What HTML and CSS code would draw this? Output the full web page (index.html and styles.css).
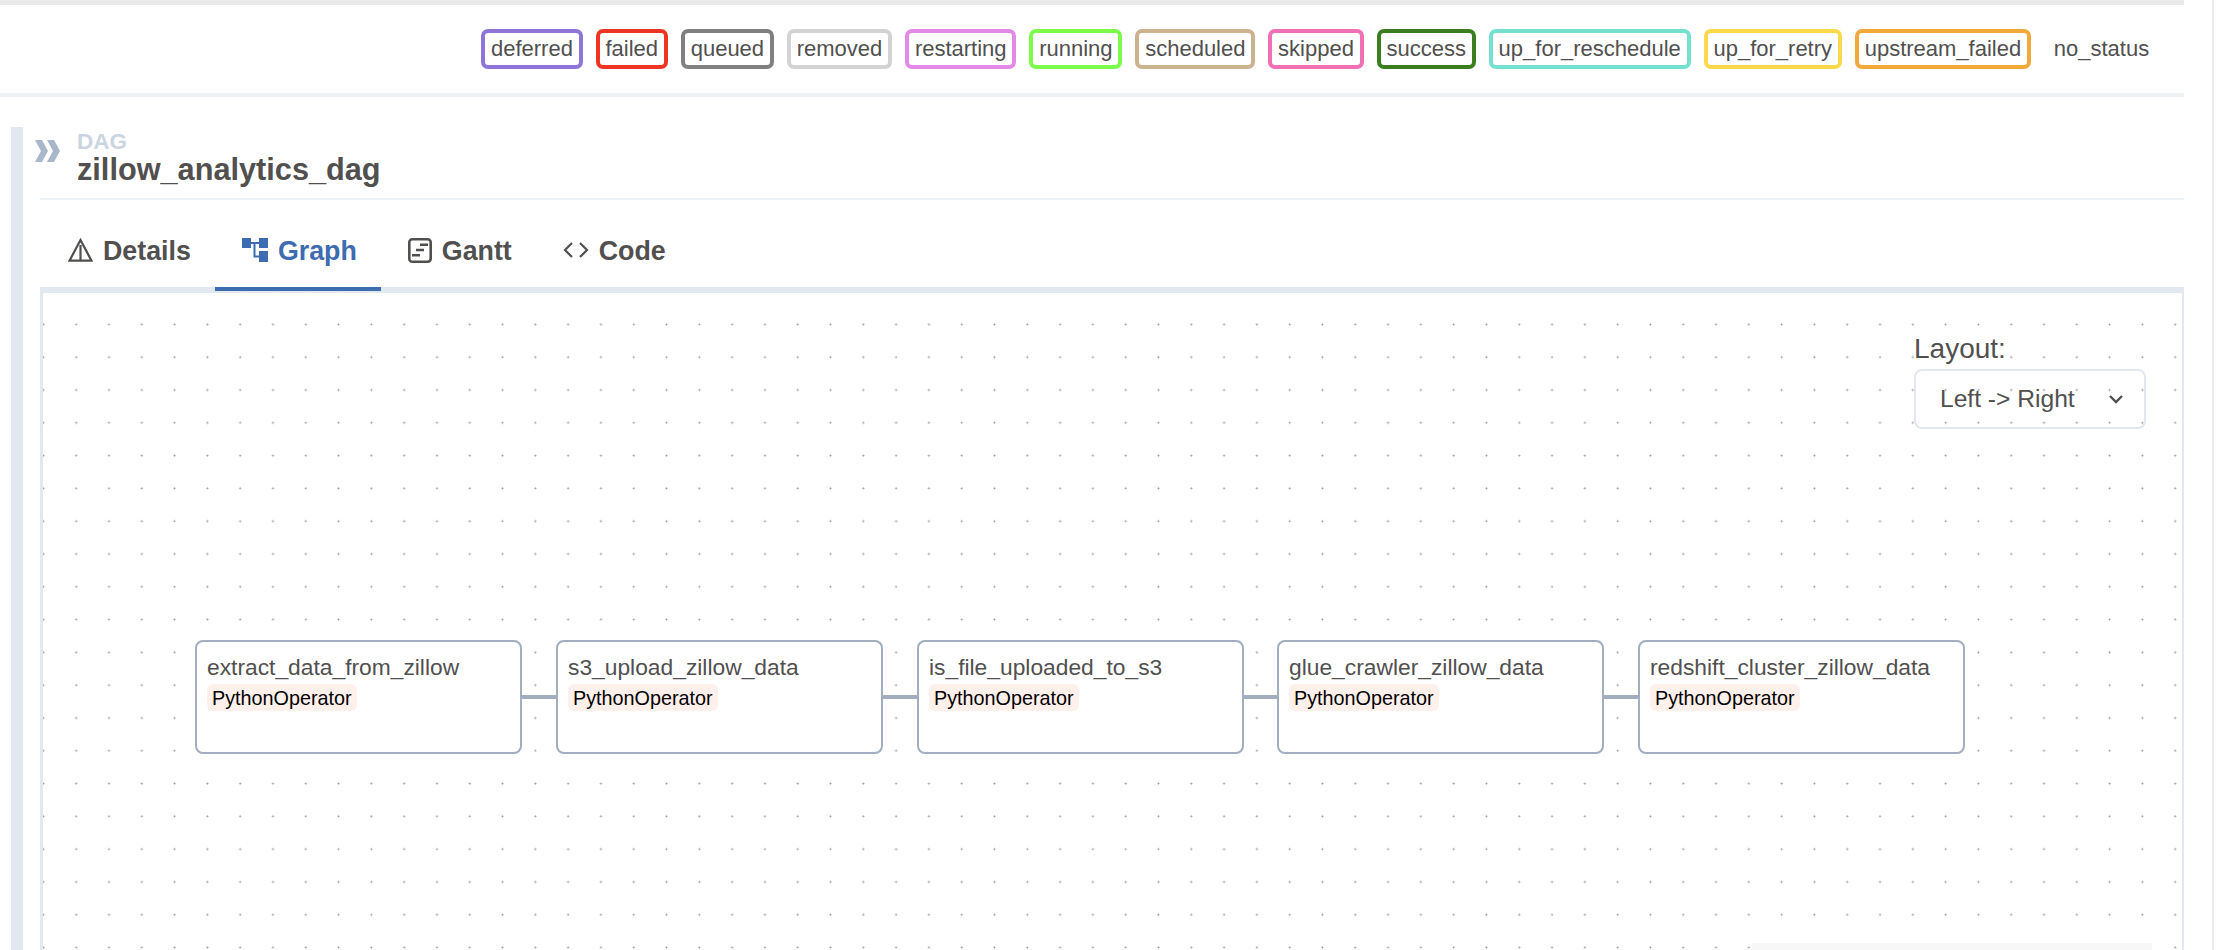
FILE: index.html
```html
<!DOCTYPE HTML>
<html>
	<head>
		<title>zillow_analytics_dag - Graph</title>
		<meta charset="utf-8">
		<link rel="stylesheet" href="styles.css">
	</head>

	<body>
		<div id="page">
			<div id="legend">
				<span class="state deferred">deferred</span>
				<span class="state failed">failed</span>
				<span class="state queued">queued</span>
				<span class="state removed">removed</span>
				<span class="state restarting">restarting</span>
				<span class="state running">running</span>
				<span class="state scheduled">scheduled</span>
				<span class="state skipped">skipped</span>
				<span class="state success">success</span>
				<span class="state up_for_reschedule">up_for_reschedule</span>
				<span class="state up_for_retry">up_for_retry</span>
				<span class="state upstream_failed">upstream_failed</span>
				<span class="state no_status">no_status</span>
			</div>

			<div id="main">
				<div id="side_bar"></div>
				<div id="content">
					<div id="dag_header">
						<svg class="collapse_icon" viewBox="0 0 25 22" width="25" height="22">
							<path d="M0 0h7l6 11-6 11H0l6-11z"/>
							<path d="M12 0h7l6 11-6 11h-7l6-11z"/>
						</svg>
						<div>
							<div id="dag_label">DAG</div>
							<div id="dag_name">zillow_analytics_dag</div>
						</div>
					</div>

					<div id="tabs">
						<a class="tab first">
							<svg viewBox="0 0 25 24" width="25" height="24" class="tab_icon">
								<path d="M12.5 2 1.5 22.7h22zM12.5 7v15.7" fill="none" stroke="currentColor" stroke-width="2.2"/>
							</svg>
							Details
						</a>
						<a class="tab active">
							<svg viewBox="0 0 26 24" width="26" height="24" class="tab_icon">
								<path d="M0 0h9v10H0zM17 0h9v10h-9zM17 13h9v11h-9z" fill="currentColor"/>
								<path d="M9 5h8M12.5 5v13.5H17" fill="none" stroke="currentColor" stroke-width="2"/>
							</svg>
							Graph
						</a>
						<a class="tab">
							<svg viewBox="0 0 24 25" width="24" height="25" class="tab_icon">
								<rect x="1.3" y="1.3" width="21.4" height="22.4" rx="3" fill="none" stroke="currentColor" stroke-width="2.6"/>
								<path d="M12 6.7h8M8 12h8M4 17.2h8" fill="none" stroke="currentColor" stroke-width="2.4"/>
							</svg>
							Gantt
						</a>
						<a class="tab">
							<svg viewBox="0 0 26 24" width="26" height="24" class="tab_icon">
								<path d="M9 5 2 12l7 7M17 5l7 7-7 7" fill="none" stroke="currentColor" stroke-width="2.2"/>
							</svg>
							Code
						</a>
					</div>

					<div id="graph">
						<div id="layout_picker">
							<div id="layout_label">Layout:</div>
							<div id="layout_select">
								<span>Left -&gt; Right</span>
								<svg viewBox="0 0 16 10" width="16" height="10">
									<path d="M2 2l6 6 6-6" fill="none" stroke="#51504f" stroke-width="2.4"/>
								</svg>
							</div>
						</div>

						<!-- nodes sit on the canvas, x is measured from the panel -->
						<div class="edge edge_1"></div>
						<div class="edge edge_2"></div>
						<div class="edge edge_3"></div>
						<div class="edge edge_4"></div>

						<div class="node node_1">
							<div class="task_name">extract_data_from_zillow</div>
							<span class="operator">PythonOperator</span>
						</div>
						<div class="node node_2">
							<div class="task_name">s3_upload_zillow_data</div>
							<span class="operator">PythonOperator</span>
						</div>
						<div class="node node_3">
							<div class="task_name">is_file_uploaded_to_s3</div>
							<span class="operator">PythonOperator</span>
						</div>
						<div class="node node_4">
							<div class="task_name">glue_crawler_zillow_data</div>
							<span class="operator">PythonOperator</span>
						</div>
						<div class="node node_5">
							<div class="task_name">redshift_cluster_zillow_data</div>
							<span class="operator">PythonOperator</span>
						</div>

						<div id="mini_panel"></div>
					</div>
				</div>
			</div>
		</div>
	</body>
</html>
```

FILE: styles.css
```css
html, body {
	margin: 0px;
	padding: 0px;
	width: 100%;
	height: 100%;
	overflow: hidden;
	background-color: #fff;
}

body {
	font-family: "Liberation Sans", Arial, sans-serif;
	color: #51504f;
}

#page {
	width: 2212px;
	height: 950px;
	border-right: 2px solid #ececec;
	overflow: hidden;
}

#legend {
	display: flex;
	justify-content: flex-end;
	align-items: center;
	gap: 13px;
	box-sizing: border-box;
	width: 2184px;
	height: 97px;
	padding-right: 25px;
	padding-bottom: 1px;
	border-top: 5px solid #e9e9e9;
	border-bottom: 4px solid #edf2f7;
	font-size: 22px;
}

.state {
	display: block;
	box-sizing: border-box;
	height: 40px;
	line-height: 32px;
	padding: 0px 5.8px;
	border: 4px solid transparent;
	border-radius: 7px;
	white-space: nowrap;
}

.deferred { border-color: #9075d8; }
.failed { border-color: #ee3524; }
.queued { border-color: #808080; }
.removed { border-color: #d3d3d3; }
.restarting { border-color: #e28ae6; }
.running { border-color: #7dfb4d; }
.scheduled { border-color: #cdb28f; }
.skipped { border-color: #f170b5; }
.success { border-color: #3a7e1f; }
.up_for_reschedule { border-color: #73e0d0; }
.up_for_retry { border-color: #fcd94a; }
.upstream_failed { border-color: #f2a93c; }

#main {
	display: flex;
	padding-top: 30px;
	padding-left: 11px;
	width: 2184px;
	box-sizing: border-box;
}

#side_bar {
	width: 12px;
	height: 830px;
	background-color: #e2e8f0;
}

#content {
	flex: 1;
	margin-left: 17px;
	min-width: 0;
}

#dag_header {
	position: relative;
	height: 73px;
	padding-left: 37px;
	border-bottom: 2px solid #edf2f7;
	box-sizing: border-box;
}

.collapse_icon {
	position: absolute;
	left: -5px;
	top: 13px;
	fill: #aab7ca;
}

#dag_label {
	padding-top: 4px;
	font-size: 22.5px;
	line-height: 21px;
	font-weight: bold;
	color: #cbd5e0;
}

#dag_name {
	font-size: 30.7px;
	line-height: 36px;
	font-weight: bold;
}

#tabs {
	display: flex;
	height: 87px;
	box-sizing: border-box;
	font-size: 26.8px;
	font-weight: bold;
}

.tab {
	display: flex;
	align-items: flex-start;
	gap: 10px;
	height: 91px;
	box-sizing: border-box;
	padding: 38px 24px 0px 27px;
	line-height: 26px;
	white-space: nowrap;
}

.tab.first {
	padding-left: 28px;
}

.tab.active {
	color: #3d6cb0;
	border-bottom: 4px solid #3d6cb0;
	position: relative;
	z-index: 2;
}

.tab_icon {
	flex: none;
}

#graph {
	position: relative;
	height: 700px;
	box-sizing: border-box;
	border-top: 6px solid #e2e8f0;
	border-left: 3px solid #e2e8f0;
	border-right: 2px solid #e2e8f0;
	background-color: #fff;
	background-image: radial-gradient(circle at center, #9a9aa2 0px, #9a9aa2 0.8px, transparent 1.2px);
	background-size: 32.8px 32.8px;
	background-position: -16px 15px;
}

#layout_picker {
	position: absolute;
	left: 1871px;
	top: 40px;
	width: 232px;
}

#layout_label {
	font-size: 28px;
	line-height: 32px;
	margin-bottom: 4px;
}

#layout_select {
	display: flex;
	justify-content: space-between;
	align-items: center;
	box-sizing: border-box;
	height: 60px;
	padding: 0px 20px 0px 24px;
	border: 2px solid #e2e8f0;
	border-radius: 8px;
	font-size: 24.6px;
}

.node {
	position: absolute;
	top: 347px;
	width: 327px;
	height: 114px;
	box-sizing: border-box;
	padding: 12px 10px 0px 10px;
	background-color: #fff;
	border: 2px solid #a0aec0;
	border-radius: 8px;
}

.node_1 { left: 152px; }
.node_2 { left: 513px; }
.node_3 { left: 874px; }
.node_4 { left: 1234px; }
.node_5 { left: 1595px; }

.task_name {
	font-size: 22.8px;
	line-height: 26px;
	white-space: nowrap;
}

.operator {
	display: block;
	width: fit-content;
	margin-top: 4px;
	height: 27px;
	line-height: 28px;
	padding: 0px 5px;
	background-color: #fff0ec;
	border-radius: 6px;
	font-size: 19.8px;
	color: #000;
}

.edge {
	position: absolute;
	top: 402px;
	width: 36px;
	height: 4px;
	background-color: #a0aec0;
}

.edge_1 { left: 478px; }
.edge_2 { left: 839px; }
.edge_3 { left: 1200px; }
.edge_4 { left: 1560px; }

#mini_panel {
	position: absolute;
	left: 1709px;
	top: 650px;
	width: 400px;
	height: 10px;
	background-color: #f7f7f7;
}
```
